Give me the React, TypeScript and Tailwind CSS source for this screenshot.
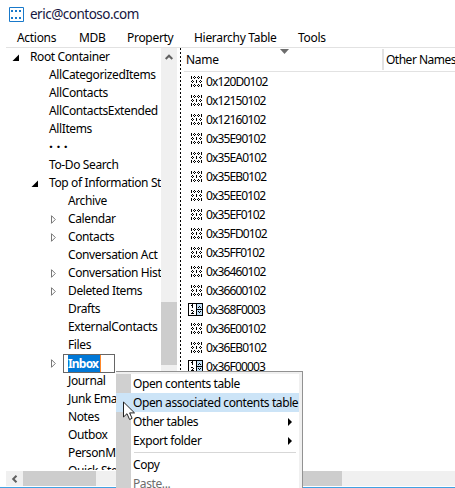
import React from "react";

type Node = { label: string; level: number; state?: "open" | "closed" };

const nodes: Node[] = [
  { label: "Root Container", level: 0, state: "open" },
  { label: "AllCategorizedItems", level: 1 },
  { label: "AllContacts", level: 1 },
  { label: "AllContactsExtended", level: 1 },
  { label: "AllItems", level: 1 },
  { label: "···", level: 1 },
  { label: "To-Do Search", level: 1 },
  { label: "Top of Information St", level: 1, state: "open" },
  { label: "Archive", level: 2 },
  { label: "Calendar", level: 2, state: "closed" },
  { label: "Contacts", level: 2, state: "closed" },
  { label: "Conversation Act", level: 2 },
  { label: "Conversation Hist", level: 2, state: "closed" },
  { label: "Deleted Items", level: 2, state: "closed" },
  { label: "Drafts", level: 2 },
  { label: "ExternalContacts", level: 2 },
  { label: "Files", level: 2 },
  { label: "Inbox", level: 2, state: "closed" },
  { label: "Journal", level: 2 },
  { label: "Junk Ema", level: 2 },
  { label: "Notes", level: 2 },
  { label: "Outbox", level: 2 },
  { label: "PersonM", level: 2 },
  { label: "Quick Ste", level: 2 },
];

const properties = [
  "0x120D0102", "0x12150102", "0x12160102", "0x35E90102", "0x35EA0102", "0x35EB0102",
  "0x35EE0102", "0x35EF0102", "0x35FD0102", "0x35FF0102", "0x36460102", "0x36600102",
  "0x368F0003", "0x36E00102", "0x36EB0102", "0x36F00003",
];

const indents = ["pl-[6px]", "pl-[25px]", "pl-[44px]"];

function Expander({ state }: { state?: "open" | "closed" }) {
  return (
    <svg className="mr-[10px] h-[9px] w-[8px] shrink-0" viewBox="0 0 8 9">
      {state === "open" && <path d="M7 1.5V8H.5Z" fill="#000" />}
      {state === "closed" && <path d="M1.5 .7V8.3L5.3 4.5Z" fill="#fff" stroke="#777" />}
    </svg>
  );
}

const binaryRows = [
  "#..#...#..#",
  "..#.#.#.#..",
  "#..#...#..#",
  "...........",
  ".#...#...#.",
  "#.#..#..#.#",
  ".#...#...#.",
  "...........",
  "#..#...#..#",
  "..#.#.#.#..",
  "#..#...#..#",
];

function BinaryIcon() {
  return (
    <svg className="ml-[3px] mr-[4px] h-[11px] w-[11px] shrink-0" viewBox="0 0 11 11" shapeRendering="crispEdges">
      {binaryRows.flatMap((row, y) =>
        row.split("").map((c, x) => (c === "#" ? <rect key={x + "-" + y} x={x} y={y} width="1" height="1" /> : null)),
      )}
      <path d="M0 1h1v1H0zM10 1h1v1h-1zM0 9h1v1H0zM10 9h1v1h-1z" />
    </svg>
  );
}

function NumberIcon() {
  return (
    <svg className="mr-[3px] h-[13px] w-[15px] shrink-0" viewBox="0 0 15 13" shapeRendering="crispEdges">
      <path d="M0 0h15v13H0z" />
      <path d="M1 1h7v11H1z" fill="#fff" />
      <path d="M9 1h5v5H9zM9 7h5v5H9z" fill="#c5e2f8" />
      <path d="M4 1h1v4H4zM3 2h1v1H3zM3 7h2v1H3zM5 8h1v1H5zM4 9h1v1H4zM3 10h3v1H3zM11 3h1v1h-1zM10 4h1v1h-1zM12 4h1v1h-1zM11 9h1v1h-1zM10 8h1v1h-1zM12 8h1v1h-1z" />
    </svg>
  );
}

function MenuRow({ children, arrow, active, muted }: { children: string; arrow?: boolean; active?: boolean; muted?: boolean }) {
  return (
    <div className={"flex h-[19px] shrink-0 items-center " + (active ? "bg-[#cce4f7]" : "")}>
      <div className={"h-full w-[15px] shrink-0 " + (active ? "" : "bg-[#d0d0d0]")} />
      <span className={"ml-[2px] flex-1 whitespace-nowrap " + (muted ? "text-[#6d6d6d]" : "")}>{children}</span>
      {arrow && <svg className="mr-[7px] h-[8px] w-[4px]" viewBox="0 0 4 8"><path d="M0 0l4 4-4 4z" /></svg>}
    </div>
  );
}

export default function App() {
  return (
    <div className="relative flex h-[488px] w-[455px] flex-col overflow-hidden bg-white font-['Noto_Sans','Open_Sans',sans-serif] text-[12px] leading-[18px] tracking-[-0.3px] text-black">
      <header className="flex h-[28px] shrink-0 items-center pl-[9px]">
        <svg className="h-[15px] w-[15px]" viewBox="0 0 15 15">
          <path d="M.5.5h14v14H.5z" fill="#fff" stroke="#1979ca" />
          <path d="M2 3h2v2H2zM6 3h2v2H6zM10 3h2v2h-2zM2 10h2v2H2zM6 10h2v2H6zM10 10h2v2h-2z" fill="#1979ca" />
        </svg>
        <span className="ml-[6px] text-[13.5px] tracking-[-0.5px] text-[#16163f]">eric@contoso.com</span>
      </header>
      <nav className="ml-[6px] flex h-[20px] shrink-0 items-center border-b border-[#e2e2e2] pl-[11px]">
        <span className="w-[62px]">Actions</span>
        <span className="w-[48px]">MDB</span>
        <span className="w-[67px]">Property</span>
        <span className="w-[104px]">Hierarchy Table</span>
        <span>Tools</span>
      </nav>
      <main className="flex h-[423px] shrink-0 pl-[6px]">
        <section className="flex h-[422px] w-[155px] shrink-0 flex-col overflow-hidden tracking-[-0.38px]">
          {nodes.map((n) => (
            <div key={n.label} className={"flex h-[18px] shrink-0 items-center whitespace-nowrap " + indents[n.level]}>
              <Expander state={n.state} />
              {n.label === "Inbox" ? (
                <span className="-ml-[5px] flex h-[19px] w-[52px] items-center border border-[#666] bg-white pl-[4px]">
                  <span className="h-[17px] w-[33px] border-r border-[#ff8728] bg-[#0078d7] font-bold leading-[17px] tracking-[-0.8px] text-white">Inbox</span>
                </span>
              ) : (
                <span className={n.label === "···" ? "text-[14px] font-bold tracking-[3.5px]" : ""}>{n.label}</span>
              )}
            </div>
          ))}
        </section>
        <aside className="flex w-[16px] shrink-0 flex-col items-center bg-[#f0f0f0]">
          <svg className="mt-[5px] h-[8px] w-[8px]" viewBox="0 0 8 8"><path d="M.7 6L4 2.700 7.300 6" fill="none" stroke="#606060" strokeWidth="2" /></svg>
          <div className="mt-[241px] h-[63px] w-full bg-[#cdcdcd]" />
        </aside>
        <div className="ml-[3px] w-px shrink-0 bg-[repeating-linear-gradient(to_bottom,#000_0_2px,#fff_2px_4px)]" />
        <section className="ml-[3px] flex min-w-0 flex-1 flex-col">
          <div className="flex h-[24px] shrink-0 border-b border-[#e2e2e2]">
            <div className="relative w-[198px] shrink-0 pl-[2px] pt-[3px]">
              Name
              <svg className="absolute left-[96px] top-[1px] h-[5px] w-[9px]" viewBox="0 0 9 5"><path d="M0 0h9L4.500 5z" fill="#6d6d6d" /></svg>
            </div>
            <div className="mt-px h-[21px] w-[2px] shrink-0 bg-[#e2e2e2]" />
            <div className="whitespace-nowrap pl-[2px] pt-[3px] tracking-[-0.5px]">Other Names</div>
          </div>
          <div className="flex flex-col pl-[4px] tracking-[-0.85px]">
            {properties.map((p) => (
              <div key={p} className="flex h-[19px] items-center">
                {p.endsWith("3") ? <NumberIcon /> : <BinaryIcon />}
                <span>{p}</span>
              </div>
            ))}
          </div>
        </section>
      </main>
      <footer className="flex h-[15px] shrink-0 pl-[6px]">
        <div className="flex w-[171px] items-center bg-[#f0f0f0]">
          <svg className="ml-[5px] mr-[4px] h-[8px] w-[8px]" viewBox="0 0 8 8"><path d="M5.500 .7L2.200 4l3.300 3.300" fill="none" stroke="#606060" strokeWidth="2" /></svg>
          <div className="h-full w-[73px] bg-[#cdcdcd]" />
        </div>
        <div className="ml-[7px] flex-1 bg-[#f0f0f0]"><div className="h-full w-[158px] bg-[#cdcdcd]" /></div>
      </footer>
      <div className="mt-px h-px bg-[#40a2e3]" />
      <div className="absolute left-[116px] top-[371px] flex h-[117px] w-[187px] flex-col overflow-hidden border-r border-t border-[#929292] bg-white tracking-[-0.4px]">
        <div className="flex h-full flex-col border-r-[3px] border-t-2 border-[#f0f0f0]">
          <MenuRow>Open contents table</MenuRow>
          <MenuRow active>Open associated contents table</MenuRow>
          <MenuRow arrow>Other tables</MenuRow>
          <MenuRow arrow>Export folder</MenuRow>
          <div className="flex h-[5px] shrink-0 items-center"><div className="h-full w-[15px] bg-[#d0d0d0]" /><div className="ml-[3px] mr-[3px] h-px flex-1 bg-[#d7d7d7]" /></div>
          <MenuRow>Copy</MenuRow>
          <MenuRow muted>Paste...</MenuRow>
        </div>
      </div>
      <svg className="absolute left-[123px] top-[401px] h-[20px] w-[13px]" viewBox="0 0 13 20">
        <path d="M.5 1v15l3.500-3.300 2.600 5.800 2.500-1.200-2.500-5.400h4.900Z" fill="#fff" stroke="#222" />
      </svg>
    </div>
  );
}
